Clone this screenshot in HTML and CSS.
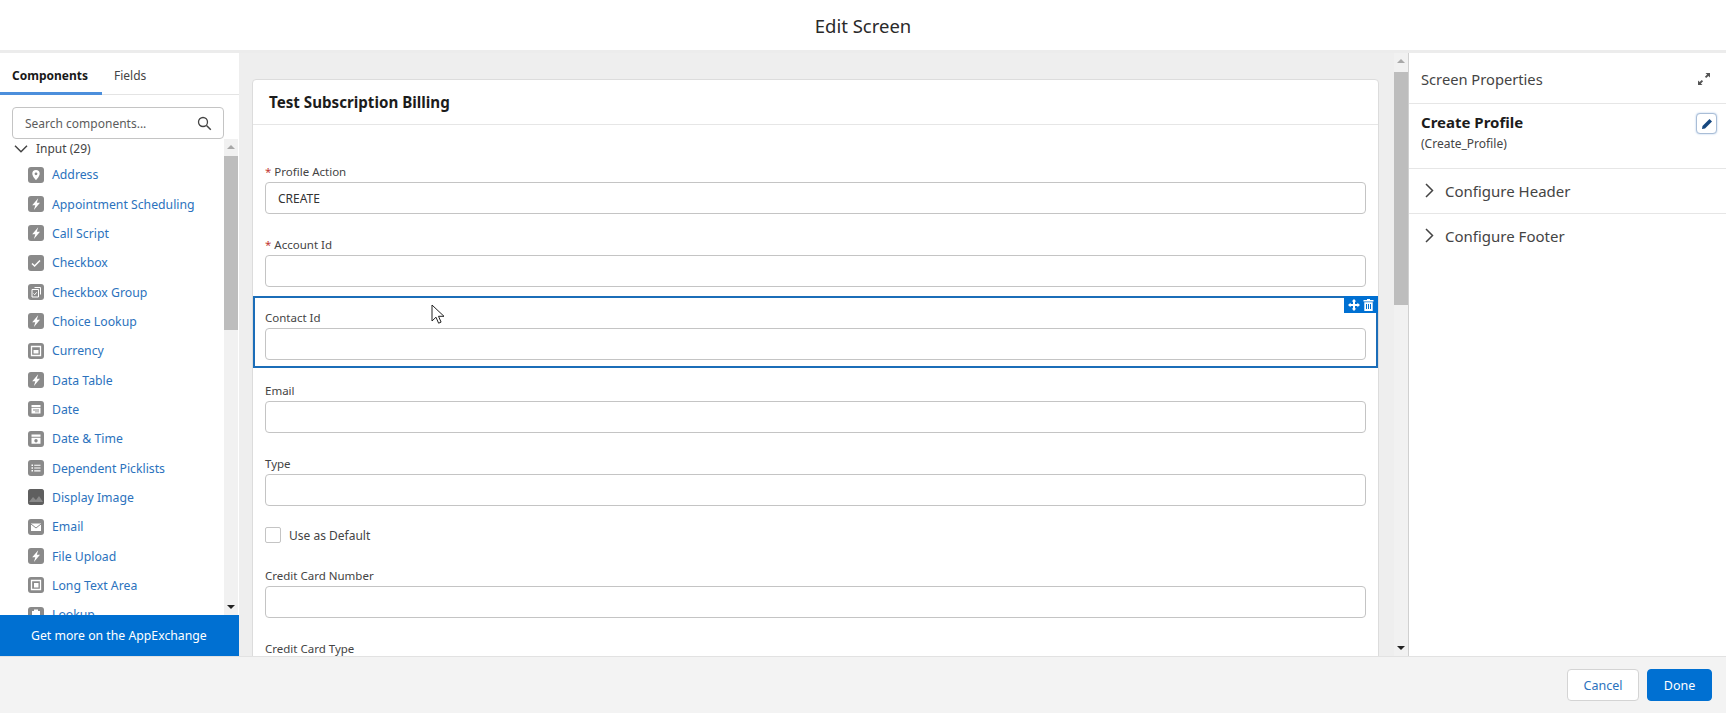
FILE: index.html
```html
<!DOCTYPE html>
<html lang="en">
<head>
<meta charset="utf-8">
<title>Edit Screen</title>
<link rel="stylesheet" href="styles.css">
</head>
<body>
<svg class="defs" width="0" height="0" aria-hidden="true">
  <symbol id="i-bolt" viewBox="0 0 16 16"><path fill="#fff" d="M10.200 2.300 4.200 9.200h3.100L5.900 13.900l6.100-7.200H8.800z"/></symbol>
  <symbol id="i-pin" viewBox="0 0 16 16"><path fill="#fff" fill-rule="evenodd" d="M8 3a3.700 3.700 0 0 0-3.700 3.700C4.300 9.400 8 13 8 13s3.700-3.600 3.700-6.300A3.700 3.700 0 0 0 8 3Zm0 2.400a1.400 1.400 0 1 1 0 2.800 1.400 1.400 0 0 1 0-2.800Z"/></symbol>
  <symbol id="i-check" viewBox="0 0 16 16"><path fill="none" stroke="#fff" stroke-width="1.500" d="m4 8.500 2.600 2.500L12 5.500"/></symbol>
  <symbol id="i-group" viewBox="0 0 16 16"><path fill="none" stroke="#fff" d="M6.500 3.500h6v7M4 5.500h6.500v7.500H4z"/><path fill="none" stroke="#fff" d="m5.500 9.500 1.200 1.200 2-2.400"/></symbol>
  <symbol id="i-currency" viewBox="0 0 16 16"><path fill="none" stroke="#fff" stroke-width="1.300" d="M3.500 3.500h9v9h-9z"/><path fill="#fff" d="M5.500 7h5v3.500h-5z"/></symbol>
  <symbol id="i-date" viewBox="0 0 16 16"><path fill="#fff" d="M3.500 4h9v2.200h-9zM3.500 7h9v5.500h-9z"/><path fill="#8a8a8a" d="M5 8.500h6v1H5zM7 10.500h4v.8H7z"/></symbol>
  <symbol id="i-datetime" viewBox="0 0 16 16"><path fill="#fff" d="M3.500 3.500h9v2.200h-9zM3.500 6.700h9v6h-9z"/><circle cx="8" cy="9.700" r="1.700" fill="#8a8a8a"/></symbol>
  <symbol id="i-list" viewBox="0 0 16 16"><path fill="#fff" d="M3.500 4.500h1.500V6H3.500zM6.200 4.700h6.300v1.100H6.200zM3.500 7.300h1.500v1.500H3.500zM6.200 7.500h6.300v1.100H6.200zM3.500 10.100h1.500v1.500H3.500zM6.200 10.300h6.300v1.100H6.200z"/></symbol>
  <symbol id="i-image" viewBox="0 0 16 16"><path fill="#5f5f5f" d="M0 0h16v16H0z"/><path fill="#8a8a8a" d="m1 13 4-5 3 3 3-4 4 6z"/></symbol>
  <symbol id="i-mail" viewBox="0 0 16 16"><path fill="#fff" d="M3 4.500h10v7.500H3z"/><path fill="none" stroke="#8a8a8a" d="m3 5 5 4 5-4"/></symbol>
  <symbol id="i-text" viewBox="0 0 16 16"><path fill="none" stroke="#fff" stroke-width="1.300" d="M3.500 3.500h9v9h-9z"/><path fill="#fff" d="M6 6h4.500v4.500H6z"/></symbol>
  <symbol id="i-lookup" viewBox="0 0 16 16"><path fill="#fff" d="M4 4h8v9H4z"/><path fill="#fff" d="M6 2.500h4V5H6z"/></symbol>
</svg>

<header class="top">Edit Screen</header>

<main class="body">
  <aside class="left">
    <nav class="tabs">
      <a class="tab active">Components</a>
      <a class="tab">Fields</a>
    </nav>
    <div class="search-wrap">
      <div class="search">
        <span>Search components...</span>
        <svg class="search-icon" width="15" height="15" viewBox="0 0 15 15"><circle cx="6" cy="6" r="4.500" fill="none" stroke="#444" stroke-width="1.300"/><path d="m9.500 9.500 4.300 4.300" stroke="#444" stroke-width="1.500"/></svg>
      </div>
    </div>
    <div class="list-wrap">
      <div class="list">
        <div class="group-head">
          <svg width="14" height="8" viewBox="0 0 14 8"><path d="m1 .8 6 6 6-6" fill="none" stroke="#444" stroke-width="1.500"/></svg>
          <span>Input (29)</span>
        </div>
        <a class="item"><svg class="ico"><use href="#i-pin"/></svg>Address</a>
        <a class="item"><svg class="ico"><use href="#i-bolt"/></svg>Appointment Scheduling</a>
        <a class="item"><svg class="ico"><use href="#i-bolt"/></svg>Call Script</a>
        <a class="item"><svg class="ico"><use href="#i-check"/></svg>Checkbox</a>
        <a class="item"><svg class="ico"><use href="#i-group"/></svg>Checkbox Group</a>
        <a class="item"><svg class="ico"><use href="#i-bolt"/></svg>Choice Lookup</a>
        <a class="item"><svg class="ico"><use href="#i-currency"/></svg>Currency</a>
        <a class="item"><svg class="ico"><use href="#i-bolt"/></svg>Data Table</a>
        <a class="item"><svg class="ico"><use href="#i-date"/></svg>Date</a>
        <a class="item"><svg class="ico"><use href="#i-datetime"/></svg>Date &amp; Time</a>
        <a class="item"><svg class="ico"><use href="#i-list"/></svg>Dependent Picklists</a>
        <a class="item"><svg class="ico"><use href="#i-image"/></svg>Display Image</a>
        <a class="item"><svg class="ico"><use href="#i-mail"/></svg>Email</a>
        <a class="item"><svg class="ico"><use href="#i-bolt"/></svg>File Upload</a>
        <a class="item"><svg class="ico"><use href="#i-text"/></svg>Long Text Area</a>
        <a class="item"><svg class="ico"><use href="#i-lookup"/></svg>Lookup</a>
      </div>
      <div class="scroll scroll-left">
        <span class="arrow up"></span>
        <span class="thumb thumb-left"></span>
        <span class="arrow down"></span>
      </div>
    </div>
    <a class="appex">Get more on the AppExchange</a>
  </aside>

  <section class="center">
    <div class="canvas">
      <div class="card">
        <h2 class="card-title">Test Subscription Billing</h2>
        <div class="spacer"></div>
        <div class="field"><label class="label"><i class="req">*</i>Profile Action</label><div class="input">CREATE</div></div>
        <div class="field"><label class="label"><i class="req">*</i>Account Id</label><div class="input"></div></div>
        <div class="field selected">
          <label class="label">Contact Id</label><div class="input"></div>
          <div class="tools">
            <svg width="12" height="12" viewBox="0 0 12 12"><path fill="#fff" d="M6 0 8.300 2.600H7v2.400h2.400V3.700L12 6 9.400 8.300V7H7v2.400h1.300L6 12 3.700 9.400H5V7H2.600v1.300L0 6l2.600-2.300V5H5V2.600H3.700z"/></svg>
            <svg width="11" height="12" viewBox="0 0 11 12"><path fill="#fff" fill-rule="evenodd" d="M4 0h3v1h3.500v1.500H.5V1H4zM1.300 3.300h8.400V12H1.300zM3 5v5h1V5zm2 0v5h1V5zm2 0v5h1V5z"/></svg>
          </div>
        </div>
        <div class="field"><label class="label">Email</label><div class="input"></div></div>
        <div class="field"><label class="label">Type</label><div class="input"></div></div>
        <div class="check-row"><span class="box"></span><span class="check-text">Use as Default</span></div>
        <div class="field"><label class="label">Credit Card Number</label><div class="input"></div></div>
        <div class="field"><label class="label">Credit Card Type</label><div class="input"></div></div>
      </div>
    </div>
    <div class="scroll scroll-center">
      <span class="arrow up"></span>
      <span class="thumb thumb-center"></span>
      <span class="arrow down"></span>
    </div>
  </section>

  <aside class="right">
    <div class="r-head">
      <span>Screen Properties</span>
      <svg width="14" height="14" viewBox="0 0 14 14"><path fill="#555" d="M8.500 1H13v4.500l-1.600-1.600-2.200 2.200-1.300-1.300 2.200-2.200zM5.500 13H1V8.500l1.600 1.600 2.200-2.200 1.300 1.300-2.200 2.200z"/></svg>
    </div>
    <div class="r-title">
      <div>
        <div class="r-name">Create Profile</div>
        <div class="r-api">(Create_Profile)</div>
      </div>
      <button class="edit"><svg width="12" height="12" viewBox="0 0 12 12"><path fill="#16477f" d="M8.500 1 11 3.500 4 10.500 1 11l.5-3z"/></svg></button>
    </div>
    <div class="r-section"><svg width="9" height="15" viewBox="0 0 9 15"><path d="m1 1 6.500 6.500L1 14" fill="none" stroke="#444" stroke-width="1.500"/></svg><span>Configure Header</span></div>
    <div class="r-section"><svg width="9" height="15" viewBox="0 0 9 15"><path d="m1 1 6.500 6.500L1 14" fill="none" stroke="#444" stroke-width="1.500"/></svg><span>Configure Footer</span></div>
  </aside>
</main>

<footer class="bottom">
  <button class="btn cancel">Cancel</button>
  <button class="btn done">Done</button>
</footer>

<svg class="cursor" width="14" height="21" viewBox="0 0 14 21"><path fill="#fff" stroke="#222" d="M1 1v16l4-3.800 2.600 6 2.500-1.100-2.600-5.800H13z"/></svg>
</body>
</html>
```

FILE: styles.css
```css
* { box-sizing: border-box; }
html, body { margin: 0; height: 713px; overflow: hidden; }
body {
  position: relative;
  display: flex;
  flex-direction: column;
  background: #f3f3f3;
  color: #3e3e3c;
  font-family: "Noto Sans", "Open Sans", sans-serif;
  font-size: 12px;
}
.defs { position: absolute; }
.top {
  height: 53px;
  flex: none;
  display: flex;
  align-items: center;
  justify-content: center;
  background: #fff;
  border-bottom: 3px solid #ececec;
  font-size: 18.500px;
  color: #2a2a2a;
}
.body {
  height: 604px;
  flex: none;
  display: grid;
  grid-template-columns: 239px 1fr 318px;
  overflow: hidden;
  border-bottom: 1px solid #e2e2e2;
}
.left {
  display: flex;
  flex-direction: column;
  background: #fff;
  min-height: 0;
}
.tabs {
  height: 42px;
  flex: none;
  display: flex;
  border-bottom: 1px solid #e4e4e4;
}
.tab {
  display: flex;
  align-items: center;
  padding: 2px 12px 0;
  height: 42px;
  color: #444;
}
.tab.active {
  width: 102px;
  font-weight: 700;
  color: #181818;
  border-bottom: 3px solid #4c8fdc;
  padding-top: 5px;
}
.search-wrap { flex: none; padding: 12px 15px 0 12px; }
.search {
  height: 32px;
  display: flex;
  align-items: center;
  justify-content: space-between;
  padding: 0 11px 0 12px;
  border: 1px solid #c4c4c4;
  border-radius: 4px;
  color: #5c5c5c;
}
.list-wrap {
  flex: 1;
  min-height: 0;
  display: flex;
  overflow: hidden;
}
.list { flex: 1; min-width: 0; overflow: hidden; }
.group-head {
  height: 21px;
  display: flex;
  align-items: flex-start;
  gap: 8px;
  padding: 1px 0 0 14px;
  line-height: 18px;
  color: #444;
}
.group-head svg { margin-top: 5px; }
.item {
  display: flex;
  align-items: center;
  gap: 8px;
  height: 29.350px;
  padding-left: 28px;
  color: #2b72bd;
  font-size: 12.250px;
}
.ico {
  width: 16px;
  height: 16px;
  flex: none;
  background: #8a8a8a;
  border-radius: 3px;
  overflow: hidden;
}
.scroll {
  position: relative;
  width: 14px;
  flex: none;
  background: #f1f1f1;
}
.scroll-left { margin-right: 1px; }
.arrow {
  position: absolute;
  left: 3px;
  width: 0;
  height: 0;
  border-left: 4px solid transparent;
  border-right: 4px solid transparent;
}
.arrow.up { top: 6px; border-bottom: 4px solid #a8a8a8; }
.arrow.down { bottom: 6px; border-top: 4px solid #222; }
.thumb { position: absolute; left: 0; right: 0; background: #bdbdbd; }
.thumb-left { top: 17px; height: 174px; }
.thumb-center { top: 19px; height: 233px; }
.appex {
  height: 41px;
  flex: none;
  display: flex;
  align-items: center;
  padding-left: 31px;
  background: #0070d2;
  color: #fff;
  font-size: 12.250px;
}
.center {
  display: flex;
  min-width: 0;
  background: #eeeeee;
  overflow: hidden;
}
.canvas { flex: 1; min-width: 0; padding: 26px 15px 0 13px; overflow: hidden; }
.card {
  background: #fff;
  border: 1px solid #dcdcdc;
  border-radius: 4px;
}
.card-title {
  margin: 0;
  height: 45px;
  display: flex;
  align-items: center;
  padding-left: 16px;
  font-size: 15.150px;
  font-weight: 700;
  color: #1c1c1c;
  border-bottom: 1px solid #e6e6e6;
}
.spacer { height: 25px; }
.field {
  position: relative;
  height: 73px;
  padding: 13px 12px 0;
}
.label {
  display: block;
  height: 19px;
  line-height: 18px;
  font-size: 11.500px;
  color: #444;
}
.req {
  font-style: normal;
  color: #c23934;
  margin-right: 3px;
}
.input {
  height: 32px;
  border: 1px solid #c4c4c4;
  border-radius: 4px;
  background: #fff;
  padding-left: 12px;
  line-height: 32px;
  color: #333;
}
.selected {
  height: 72px;
  margin-bottom: 1px;
  box-shadow: inset 0 0 0 2px #1b6db8;
}
.tools {
  position: absolute;
  top: 0;
  right: 0;
  width: 34px;
  height: 17px;
  background: #0070d2;
  display: flex;
  align-items: center;
  justify-content: center;
  gap: 3px;
}
.check-row {
  height: 39px;
  display: flex;
  align-items: flex-start;
  gap: 8px;
  padding: 12px 12px 0;
  line-height: 16px;
  color: #444;
}
.check-text { padding-top: 1px; }
.box {
  width: 16px;
  height: 16px;
  border: 1px solid #c4c4c4;
  border-radius: 2px;
}
.right {
  background: #fff;
  border-left: 1px solid #d0d0d0;
}
.r-head {
  height: 51px;
  display: flex;
  align-items: center;
  justify-content: space-between;
  padding: 2px 15px 0 12px;
  border-bottom: 1px solid #e6e6e6;
  font-size: 14.700px;
  color: #444;
}
.r-title {
  height: 65px;
  display: flex;
  justify-content: space-between;
  padding: 8px 9px 0 12px;
  border-bottom: 1px solid #e6e6e6;
}
.r-name { font-size: 15px; font-weight: 700; color: #1c1c1c; line-height: 20px; }
.r-api { font-size: 12px; color: #444; line-height: 24px; }
.edit {
  width: 21px;
  height: 21px;
  margin-top: 1px;
  padding: 0;
  display: flex;
  align-items: center;
  justify-content: center;
  background: #fff;
  border: 1px solid #a9bdd6;
  border-radius: 4px;
  box-shadow: 0 0 2px #a9c4e6;
}
.r-section {
  height: 45px;
  display: flex;
  align-items: center;
  gap: 11px;
  padding: 0 0 1px 16px;
  font-size: 15px;
  color: #444;
  border-bottom: 1px solid #e6e6e6;
}
.r-section:last-child { border-bottom: 0; padding-bottom: 2px; }
.bottom {
  flex: 1;
  display: flex;
  justify-content: flex-end;
  align-items: center;
  gap: 8px;
  padding: 0 14px 0 0;
  background: #f3f3f3;
}
.btn {
  height: 32px;
  border-radius: 4px;
  font: inherit;
  font-size: 12.500px;
  padding: 0;
}
.cancel { width: 72px; background: #fff; border: 1px solid #d4d4d4; color: #2b72bd; }
.done { width: 65px; background: #0070d2; border: 1px solid #0070d2; color: #fff; }
.cursor { position: absolute; left: 431px; top: 304px; }
```
